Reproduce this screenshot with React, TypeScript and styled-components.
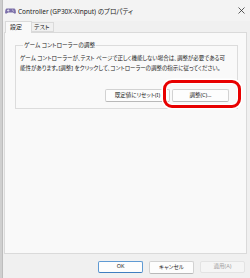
import styled, { createGlobalStyle } from "styled-components";

const GlobalStyle = createGlobalStyle`
  html, body {
    margin: 0;
    background: #cfcfcf;
  }
  body {
    font-family: "Noto Sans", "Noto Sans CJK JP", sans-serif;
    color: #1b1b1b;
  }
`;

const Window = styled.div`
  box-sizing: border-box;
  margin-left: 2px;
  width: 248px;
  height: 278px;
  background: #f0f0f0;
  border-left: 1px solid #bdbdbd;
  display: flex;
  flex-direction: column;
  overflow: hidden;
`;

const TitleBar = styled.div`
  height: 21px;
  display: flex;
  align-items: center;
  gap: 2px;
  padding: 0 4px 0 2px;
  background: #f3f3f3;
`;

const Title = styled.span`
  font-size: 6.5px;
  white-space: nowrap;
  font-feature-settings: "palt";
`;

const Close = styled.span`
  margin-left: auto;
  display: flex;
  padding-right: 1px;
`;

const Content = styled.div`
  padding: 0 3px 0 1px;
  display: flex;
  flex-direction: column;
`;

const Tabs = styled.div`
  height: 11px;
  display: flex;
  align-items: flex-end;
  padding-left: 1px;
`;

const Tab = styled.div<{ $active?: boolean }>`
  box-sizing: border-box;
  position: relative;
  z-index: 1;
  height: ${(p) => (p.$active ? "12px" : "10px")};
  width: ${(p) => (p.$active ? "27px" : "22px")};
  margin-bottom: ${(p) => (p.$active ? "-1px" : "0")};
  padding-left: ${(p) => (p.$active ? "4px" : "2px")};
  background: ${(p) => (p.$active ? "#f9f9f9" : "#f0f0f0")};
  border: 1px solid #dadada;
  border-bottom: ${(p) => (p.$active ? "none" : "1px solid #dadada")};
  border-left: ${(p) => (p.$active ? "1px solid #dadada" : "none")};
  font-size: 6px;
  line-height: ${(p) => (p.$active ? "11px" : "9px")};
  font-feature-settings: "palt";
`;

const Panel = styled.div`
  box-sizing: border-box;
  height: 222px;
  border: 1px solid #dadada;
  background: #f9f9f9;
  padding: 8px 8px 0 10px;
`;

const Group = styled.fieldset`
  margin: 0;
  min-width: 0;
  border: 1px solid #dcdcdc;
  padding: 4px 8px 6px 4px;
`;

const Legend = styled.legend`
  padding: 0 1px;
  margin-left: 3px;
  font-size: 5.7px;
  line-height: 8px;
  font-feature-settings: "palt";
`;

const Description = styled.p`
  margin: 0;
  font-size: 5.5px;
  line-height: 10px;
  font-feature-settings: "palt";
  white-space: nowrap;
`;

const ButtonRow = styled.div<{ $gap: number }>`
  display: flex;
  justify-content: flex-end;
  gap: ${(p) => p.$gap}px;
`;

const GroupButtons = styled(ButtonRow)`
  margin-top: 16px;
`;

const DialogButtons = styled(ButtonRow)`
  margin-top: 7px;
  padding-right: 2px;
`;

const Button = styled.button<{ $width: number; $variant?: "primary" | "disabled" }>`
  box-sizing: border-box;
  width: ${(p) => p.$width}px;
  height: ${(p) => (p.$variant ? "12px" : "13px")};
  padding: 0;
  border-radius: 2px;
  font-family: inherit;
  font-size: 5.5px;
  line-height: 1;
  font-feature-settings: "palt";
  white-space: nowrap;
  overflow: hidden;
  background: ${(p) => (p.$variant === "disabled" ? "#f5f5f5" : "#fdfdfd")};
  color: ${(p) => (p.$variant === "disabled" ? "#9d9d9d" : "#1b1b1b")};
  border: 1px solid
    ${(p) =>
      p.$variant === "primary"
        ? "#5f9ad3"
        : p.$variant === "disabled"
        ? "#e3e3e3"
        : "#d2d2d2"};
  border-bottom-color: ${(p) =>
    p.$variant === "primary"
      ? "#3f7fc0"
      : p.$variant === "disabled"
      ? "#e3e3e3"
      : "#b9b9b9"};
`;

const Marked = styled.div`
  position: relative;
  display: flex;
`;

const Highlight = styled.span`
  position: absolute;
  box-sizing: border-box;
  left: -9px;
  top: -9px;
  width: 78px;
  height: 28px;
  border: 3.5px solid #e80000;
  border-radius: 9px;
  box-shadow: 0 0 0 1.5px #ffffff, inset 0 0 0 1px #ffffff;
  pointer-events: none;
`;

function GamepadIcon() {
  return (
    <svg width="11" height="8" viewBox="0 0 11 8">
      <path
        d="M2.2 1.4h6.6c1 0 1.6.7 1.8 1.7l.3 2.4c.1.9-.7 1.5-1.4 1L7.8 5.4H3.2L1.5 6.5C.8 7 0 6.4.1 5.5l.3-2.4C.6 2.1 1.2 1.4 2.2 1.4z"
        fill="#7b6fa8"
      />
      <rect x="2" y="3" width="2.4" height="0.8" fill="#e6e3f2" />
      <rect x="2.8" y="2.2" width="0.8" height="2.4" fill="#e6e3f2" />
      <circle cx="7.6" cy="3" r="0.5" fill="#e6e3f2" />
      <circle cx="8.6" cy="4" r="0.5" fill="#e6e3f2" />
    </svg>
  );
}

function CloseIcon() {
  return (
    <svg width="7" height="7" viewBox="0 0 7 7">
      <path d="M0.5 0.5l6 6M6.5 0.5l-6 6" stroke="#333" strokeWidth="0.8" />
    </svg>
  );
}

export default function App() {
  return (
    <>
      <GlobalStyle />
      <Window>
        <TitleBar>
          <GamepadIcon />
          <Title>Controller (GP30X-Xinput) のプロパティ</Title>
          <Close>
            <CloseIcon />
          </Close>
        </TitleBar>
        <Content>
          <Tabs>
            <Tab $active>設定</Tab>
            <Tab>テスト</Tab>
          </Tabs>
          <Panel>
            <Group>
              <Legend>ゲーム コントローラーの調整</Legend>
              <Description>
                ゲーム コントローラーが、テスト ページで正しく機能しない場合は、調整が必要である可
                <br />
                能性があります。[調整] をクリックして、コントローラーの調整の指示に従ってください。
              </Description>
              <GroupButtons $gap={2}>
                <Button $width={65}>既定値にリセット(I)</Button>
                <Marked>
                  <Button $width={57}>調整(C)...</Button>
                  <Highlight />
                </Marked>
              </GroupButtons>
            </Group>
          </Panel>
          <DialogButtons $gap={6}>
            <Button $width={45} $variant="primary">
              OK
            </Button>
            <Button $width={45}>キャンセル</Button>
            <Button $width={45} $variant="disabled">
              適用(A)
            </Button>
          </DialogButtons>
        </Content>
      </Window>
    </>
  );
}
